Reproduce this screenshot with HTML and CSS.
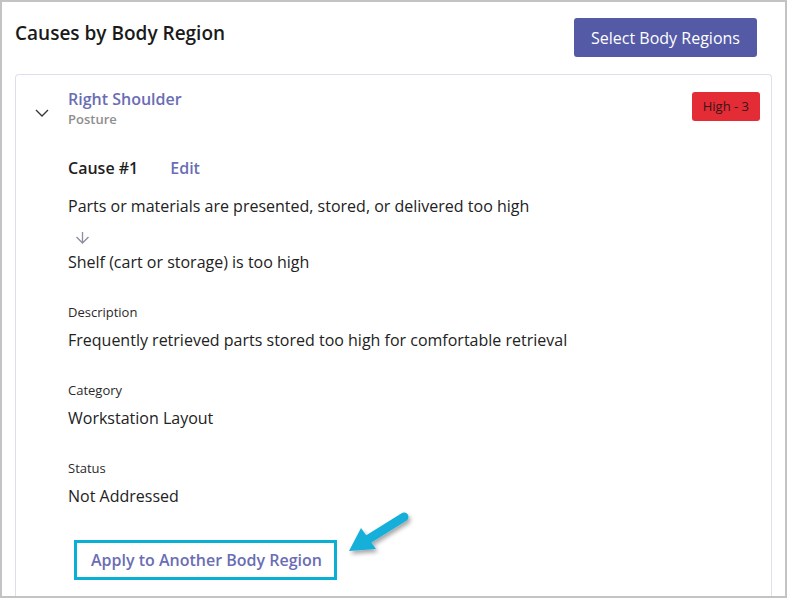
FILE: index.html
```html
<!DOCTYPE html>
<html lang="en">
<head>
    <meta charset="UTF-8">
    <title>Causes by Body Region</title>
    <link rel="stylesheet" href="styles.css">
</head>
<body>
<div class="frame">
    <div class="head">
        <h2 class="title">Causes by Body Region</h2>
        <button class="btn-primary">Select Body Regions</button>
    </div>
    <div class="card">
        <div class="toggle">
            <svg width="14" height="8" viewBox="0 0 14 8"><polyline points="1,1 7,7 13,1" fill="none" stroke="#333" stroke-width="1.3"/></svg>
        </div>
        <div class="main">
            <div class="region">
                <div>
                    <div class="region-name">Right Shoulder</div>
                    <div class="region-type">Posture</div>
                </div>
                <span class="badge">High - 3</span>
            </div>

            <div class="cause-head">
                <span class="cause-title">Cause #1</span>
                <a class="link" href="#">Edit</a>
            </div>

            <div class="text">Parts or materials are presented, stored, or delivered too high</div>
            <div class="down">
                <svg width="15" height="12" viewBox="0 0 15 12"><path d="M7.5 0 V11 M1.5 5 L7.5 11 L13.5 5" fill="none" stroke="#8d8da0" stroke-width="1.3"/></svg>
            </div>
            <div class="text">Shelf (cart or storage) is too high</div>

            <div class="field">
                <div class="label">Description</div>
                <div class="text">Frequently retrieved parts stored too high for comfortable retrieval</div>
            </div>
            <div class="field">
                <div class="label">Category</div>
                <div class="text">Workstation Layout</div>
            </div>
            <div class="field">
                <div class="label">Status</div>
                <div class="text">Not Addressed</div>
            </div>

            <div class="apply">Apply to Another Body Region</div>
        </div>
    </div>
    <!-- callout arrow -->
    <svg class="callout" width="90" height="64" viewBox="0 0 90 64">
        <defs>
            <filter id="sh" x="-20%" y="-20%" width="150%" height="160%">
                <feDropShadow dx="2" dy="3" stdDeviation="2" flood-color="#000" flood-opacity="0.35"/>
            </filter>
        </defs>
        <g filter="url(#sh)">
            <line x1="63" y1="10" x2="26" y2="33" stroke="#17afd9" stroke-width="9" stroke-linecap="round"/>
            <polygon points="8,44 20,21 35,42" fill="#17afd9"/>
        </g>
    </svg>
</div>
</body>
</html>
```

FILE: styles.css
```css
*{
    margin:0;
    padding:0;
    box-sizing: border-box;
}
body{
    font-family: "Open Sans", "Noto Sans", sans-serif;
    color: #222;
    background: #fff;
}
.frame{
    width:787px;
    height:598px;
    border:2px solid #c3c3c3;
    padding:0 13px;
    overflow: hidden;
    position: relative;
}
.head{
    display: flex;
    justify-content: space-between;
    align-items: flex-start;
    padding-top:16px;
}
.title{
    font-size:19px;
    font-weight:600;
    color:#1a1a1a;
    line-height:24px;
    margin-top:3px;
}
.btn-primary{
    font-family: inherit;
    width:183px;
    height:39px;
    margin-right:15px;
    background:#545aa6;
    color:#fff;
    border:none;
    border-radius:3px;
    font-size:16px;
}
.card{
    margin-top:17px;
    border:1px solid #e0deec;
    border-bottom:none;
    border-radius:4px 4px 0 0;
    height:600px;
    display: flex;
    padding:13px 11px 0 0;
}
.toggle{
    width:52px;
    padding:12px 0 0 19px;
}
.main{
    flex:1;
}
.region{
    display: flex;
    justify-content: space-between;
    align-items: flex-start;
}
.region-name{
    font-size:16px;
    font-weight:600;
    color:#6a6db4;
    line-height:22px;
}
.region-type{
    font-size:13px;
    font-weight:600;
    color:#8e8e8e;
    line-height:18px;
}
.badge{
    margin-top:4px;
    background:#e32c36;
    color:#3a1414;
    font-size:13px;
    line-height:29px;
    padding:0 11px;
    border-radius:3px;
}
.cause-head{
    margin-top:29px;
    display: flex;
    gap:32px;
    line-height:22px;
    font-size:16px;
}
.cause-title{
    font-weight:600;
    color:#1e1e1e;
}
.link{
    color:#6a6db4;
    font-weight:600;
    text-decoration: none;
}
.cause-head + .text{
    margin-top:16px;
}
.text{
    font-size:16px;
    line-height:22px;
    color:#222;
}
.down{
    height:34px;
    padding:10px 0 0 7px;
}
.field{
    margin-top:30px;
}
.label{
    font-size:13px;
    line-height:18px;
    margin-bottom:8px;
    color:#2a2a2a;
}
.apply{
    display: block;
    margin:33px 0 0 6px;
    width:263px;
    height:40px;
    border:3px solid #0aafd6;
    padding-left:14px;
    line-height:34px;
    font-size:16px;
    font-weight:600;
    color:#6a6db4;
}
.callout{
    position: absolute;
    left:339px;
    top:505px;
}
```
